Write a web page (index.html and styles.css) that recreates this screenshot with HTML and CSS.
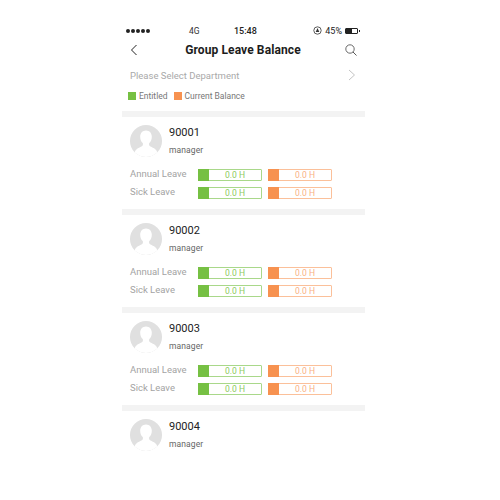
FILE: index.html
```html
<!DOCTYPE html>
<html lang="en">
<head>
    <meta charset="UTF-8">
    <title>Group Leave Balance</title>
    <link rel="stylesheet" href="styles.css">
</head>
<body>
    <div class="phone">
        <div class="status-bar">
            <div class="signal"><i></i><i></i><i></i><i></i><i></i></div>
            <span class="network">4G</span>
            <span class="clock">15:48</span>
            <div class="status-right">
                <svg class="lock" width="9" height="9" viewBox="0 0 9 9"><circle cx="4.5" cy="4.5" r="3.7" fill="none" stroke="#333" stroke-width="0.8"/><path d="M4.500 2L6.300 6H2.700Z" fill="#333"/></svg>
                <span>45%</span>
                <div class="battery"><div class="battery-fill"></div></div>
            </div>
        </div>

        <div class="nav-bar">
            <svg class="back" width="8" height="12" viewBox="0 0 8 12"><path d="M6.500 1L1.500 6L6.500 11" fill="none" stroke="#222" stroke-width="1"/></svg>
            <h1>Group Leave Balance</h1>
            <svg class="search" width="12" height="12" viewBox="0 0 12 12"><circle cx="5" cy="5" r="4.200" fill="none" stroke="#444" stroke-width="0.8"/><path d="M8 8L11.500 11.500" stroke="#444" stroke-width="0.9"/></svg>
        </div>

        <div class="department">
            <span>Please Select Department</span>
            <svg width="8" height="12" viewBox="0 0 8 12"><path d="M1 1L6.500 6L1 11" fill="none" stroke="#c4c4c4" stroke-width="1"/></svg>
        </div>

        <div class="legend">
            <span class="legend-item"><i class="swatch green"></i>Entitled</span>
            <span class="legend-item"><i class="swatch orange"></i>Current Balance</span>
        </div>

        <div class="employee">
            <div class="person">
                <svg class="avatar" viewBox="0 0 32 32"><use href="#avatar-shape"/></svg>
                <div class="person-info"><div class="person-id">90001</div><div class="person-role">manager</div></div>
            </div>
            <div class="leave-row">
                <span class="leave-name">Annual Leave</span>
                <div class="bar green"><i></i><span>0.0 H</span></div>
                <div class="bar orange"><i></i><span>0.0 H</span></div>
            </div>
            <div class="leave-row">
                <span class="leave-name">Sick Leave</span>
                <div class="bar green"><i></i><span>0.0 H</span></div>
                <div class="bar orange"><i></i><span>0.0 H</span></div>
            </div>
        </div>

        <div class="employee">
            <div class="person">
                <svg class="avatar" viewBox="0 0 32 32"><use href="#avatar-shape"/></svg>
                <div class="person-info"><div class="person-id">90002</div><div class="person-role">manager</div></div>
            </div>
            <div class="leave-row">
                <span class="leave-name">Annual Leave</span>
                <div class="bar green"><i></i><span>0.0 H</span></div>
                <div class="bar orange"><i></i><span>0.0 H</span></div>
            </div>
            <div class="leave-row">
                <span class="leave-name">Sick Leave</span>
                <div class="bar green"><i></i><span>0.0 H</span></div>
                <div class="bar orange"><i></i><span>0.0 H</span></div>
            </div>
        </div>

        <div class="employee">
            <div class="person">
                <svg class="avatar" viewBox="0 0 32 32"><use href="#avatar-shape"/></svg>
                <div class="person-info"><div class="person-id">90003</div><div class="person-role">manager</div></div>
            </div>
            <div class="leave-row">
                <span class="leave-name">Annual Leave</span>
                <div class="bar green"><i></i><span>0.0 H</span></div>
                <div class="bar orange"><i></i><span>0.0 H</span></div>
            </div>
            <div class="leave-row">
                <span class="leave-name">Sick Leave</span>
                <div class="bar green"><i></i><span>0.0 H</span></div>
                <div class="bar orange"><i></i><span>0.0 H</span></div>
            </div>
        </div>

        <div class="employee last">
            <div class="person">
                <svg class="avatar" viewBox="0 0 32 32"><use href="#avatar-shape"/></svg>
                <div class="person-info"><div class="person-id">90004</div><div class="person-role">manager</div></div>
            </div>
        </div>
    </div>

    <svg class="defs" width="0" height="0">
        <defs>
            <g id="avatar-shape">
                <clipPath id="avatar-clip"><circle cx="16" cy="16" r="16"/></clipPath>
                <circle cx="16" cy="16" r="16" fill="#e0e0e0"/>
                <g clip-path="url(#avatar-clip)">
                    <path d="M16 5.500c-3.600 0-5.800 2.800-5.800 6.400 0 2.600 1 4.800 2.500 6.200 .4 .5 .4 2.200-.4 2.900C10.500 22.500 5 23.300 4.500 28.500 7 31 11 32 16 32s9-1 11.500-3.500C27 23.300 21.500 22.500 19.700 21c-.8-.7-.8-2.400-.4-2.900 1.500-1.400 2.500-3.600 2.500-6.200 0-3.600-2.200-6.400-5.800-6.400Z" fill="#fff"/>
                </g>
            </g>
        </defs>
    </svg>
</body>
</html>
```

FILE: styles.css
```css
html, body {
    margin: 0;
    padding: 0;
    background-color: #fff;
}
body {
    font-family: Roboto, "Liberation Sans", sans-serif;
    color: #333;
    height: 500px;
    overflow: hidden;
}
.defs {
    display: block;
}

.phone {
    width: 243px;
    margin-left: 122px;
    padding-top: 24px;
}

/* status bar */
.status-bar {
    height: 13px;
    display: flex;
    align-items: center;
    font-size: 8px;
    color: #222;
    padding: 0 7px 0 4px;
}
.signal {
    display: flex;
    gap: 1px;
    width: 63px;
}
.signal i {
    width: 4px;
    height: 4px;
    border-radius: 50%;
    background-color: #222;
}
.network {
    width: 45px;
    font-size: 8.5px;
    color: #333;
}
.clock {
    font-weight: 500;
    font-size: 9px;
}
.status-right {
    margin-left: auto;
    display: flex;
    align-items: center;
    gap: 3px;
    font-size: 9px;
}
.battery {
    width: 13px;
    height: 6px;
    border: 1px solid #222;
    border-radius: 1px;
    box-sizing: border-box;
    position: relative;
}
.battery::after {
    content: "";
    position: absolute;
    right: -3px;
    top: 1px;
    width: 1px;
    height: 2px;
    background-color: #222;
}
.battery-fill {
    width: 6px;
    height: 100%;
    background-color: #222;
}

/* nav */
.nav-bar {
    height: 26px;
    display: flex;
    align-items: center;
    justify-content: space-between;
    padding: 0 8px 0 8px;
}
.nav-bar h1 {
    margin: 0 0 0 3px;
    font-size: 12px;
    font-weight: 700;
    letter-spacing: 0.1px;
    color: #1c1c1c;
}

/* department select */
.department {
    height: 24px;
    padding: 0 9px 1px 8px;
    display: flex;
    align-items: center;
    justify-content: space-between;
    font-size: 9.5px;
    color: #a9a9a9;
}

/* legend */
.legend {
    height: 23px;
    box-sizing: border-box;
    padding: 0 0 8px 6px;
    display: flex;
    align-items: center;
    gap: 6px;
    font-size: 8.5px;
    color: #777;
}
.legend-item {
    display: flex;
    align-items: center;
    gap: 3px;
}
.swatch {
    width: 8px;
    height: 8px;
}
.swatch.green {
    background-color: #76c043;
}
.swatch.orange {
    background-color: #f79250;
}

/* employee cards */
.employee {
    border-top: 6px solid #f3f3f3;
    box-sizing: border-box;
    height: 98px;
    padding: 8px 8px 0;
}
.employee.last {
    height: 48px;
}
.person {
    display: flex;
    gap: 7px;
}
.avatar {
    width: 32px;
    height: 32px;
    flex: none;
}
.person-id {
    font-size: 11px;
    line-height: 14px;
    color: #222;
    margin-top: 1px;
}
.person-role {
    font-size: 8.5px;
    line-height: 12px;
    color: #666;
    margin-top: 4px;
    letter-spacing: 0.1px;
}
.leave-row {
    display: flex;
    align-items: center;
    height: 12px;
    margin-bottom: 6px;
}
.person + .leave-row {
    margin-top: 12px;
}
.leave-name {
    width: 68px;
    font-size: 9.5px;
    color: #a3a3a3;
    position: relative;
    top: -2px;
}
.bar {
    width: 64px;
    height: 12px;
    box-sizing: border-box;
    border: 1px solid;
    border-radius: 1px;
    display: flex;
    margin-right: 6px;
    font-size: 8.5px;
    line-height: 10px;
}
.bar i {
    width: 11px;
    margin: -1px 0 -1px -1px;
    flex: none;
}
.bar span {
    flex: 1;
    text-align: center;
}
.bar.green {
    border-color: #a9d88a;
    color: #8ccb5e;
}
.bar.green i {
    background-color: #76c043;
}
.bar.orange {
    border-color: #fbc09a;
    color: #f9b184;
}
.bar.orange i {
    background-color: #f79250;
}
```
